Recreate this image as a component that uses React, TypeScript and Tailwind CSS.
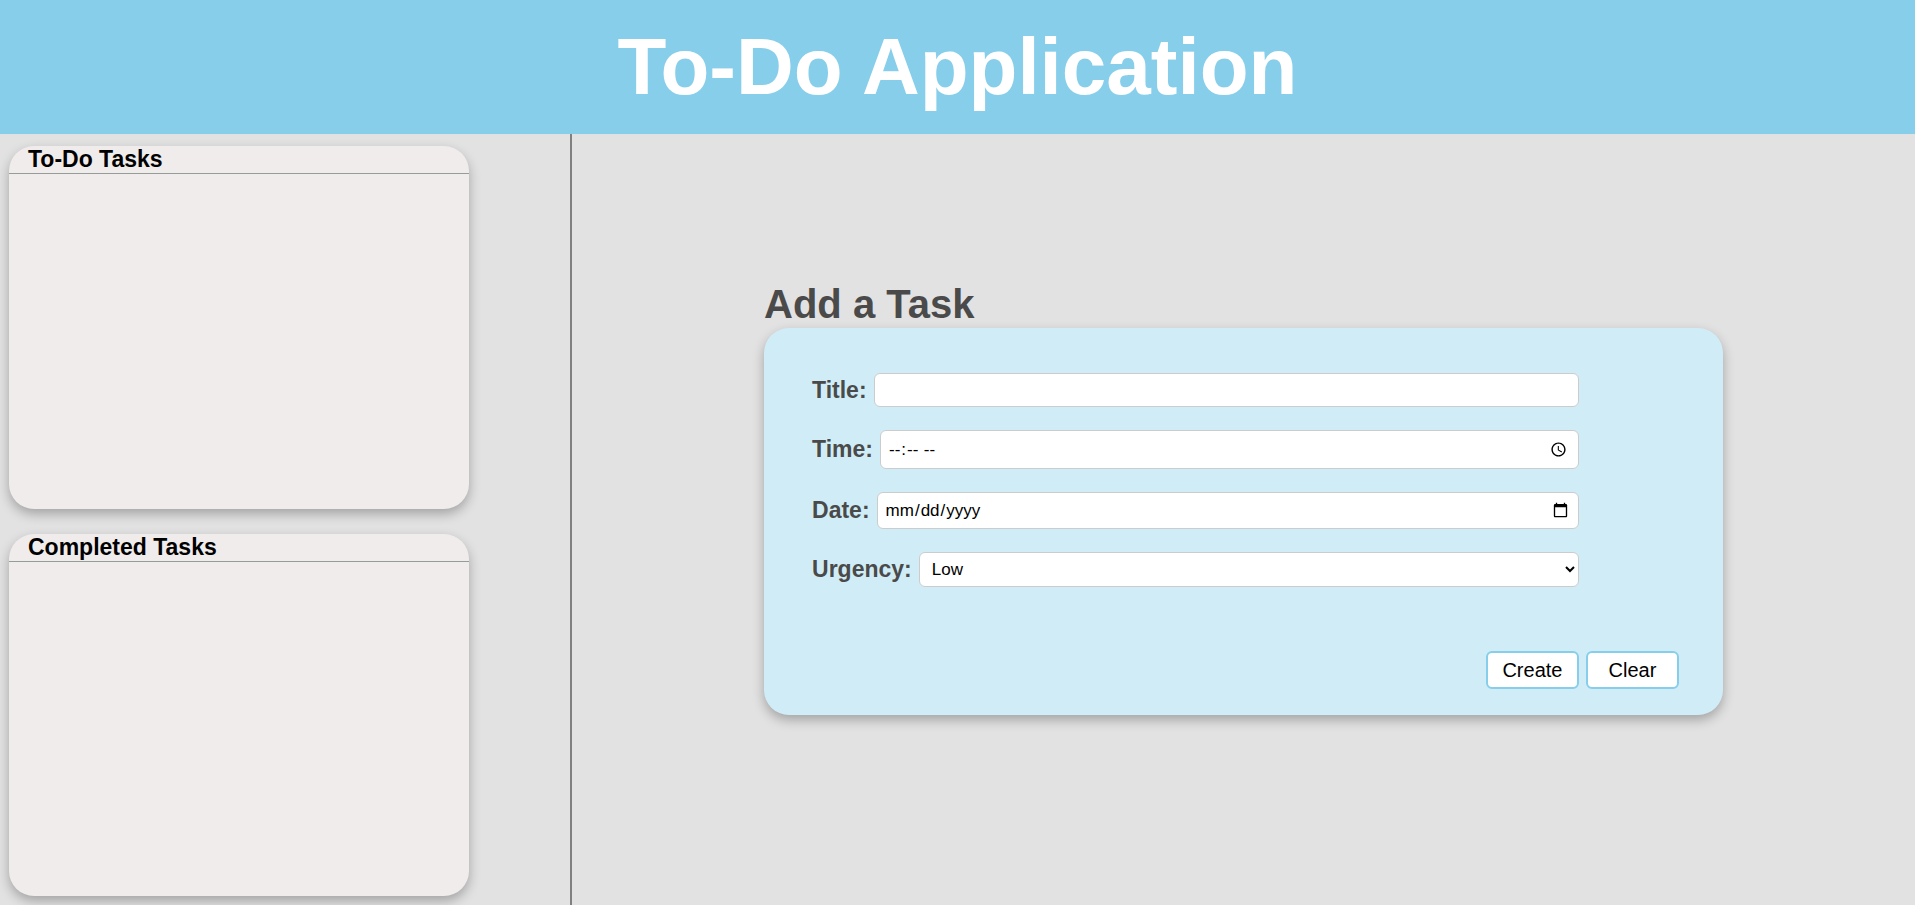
import { useState } from "react";
import type { FormEvent, ReactNode } from "react";

type Task = { title: string; time: string; date: string; urgency: string };

const cardShadow = "shadow-[0_5px_12px_rgba(0,0,0,0.28)]";
const field =
  "min-w-0 flex-1 rounded-[6px] border border-[#cccccc] bg-white text-[17px] text-black";
const button =
  "h-[38px] w-[93px] rounded-[6px] border-2 border-[#87ceeb] bg-white text-[20px] text-black";

function TaskList({ title, tasks }: { title: string; tasks: Task[] }) {
  return (
    <section className={`w-[82%] flex-1 rounded-[25px] bg-[#f0eceb] ${cardShadow}`}>
      <h2 className="border-b border-[#969c98] pl-[19px] text-[23px] leading-[27px] font-bold text-black">
        {title}
      </h2>
      <ul className="px-5 py-2">
        {tasks.map((task, i) => (
          <li key={i}>
            {task.title} {task.date} {task.time} {task.urgency}
          </li>
        ))}
      </ul>
    </section>
  );
}

function Row({ id, label, children }: { id: string; label: string; children: ReactNode }) {
  return (
    <div className="flex items-center gap-[7px]">
      <label htmlFor={id} className="text-[23px] leading-[27px] font-bold text-[#4a4a4a]">
        {label}
      </label>
      {children}
    </div>
  );
}

export default function App() {
  const [tasks, setTasks] = useState<Task[]>([]);

  function create(event: FormEvent<HTMLFormElement>) {
    event.preventDefault();
    const data = new FormData(event.currentTarget);
    const read = (name: string) => String(data.get(name) ?? "");
    setTasks([
      ...tasks,
      { title: read("title"), time: read("time"), date: read("date"), urgency: read("urgency") },
    ]);
    event.currentTarget.reset();
  }

  return (
    <div className="flex min-h-screen flex-col bg-[#e2e2e2] font-['Liberation_Sans',Arial,sans-serif]">
      <header className="bg-[#87ceeb] py-[21px] text-center">
        <h1 className="text-[80px] leading-[92px] font-bold text-white">To-Do Application</h1>
      </header>
      <div className="flex flex-1">
        <aside className="flex w-[29.87%] flex-col gap-[25px] border-r-2 border-[#808080] pt-3 pb-[9px] pl-[9px]">
          <TaskList title="To-Do Tasks" tasks={tasks} />
          <TaskList title="Completed Tasks" tasks={[]} />
        </aside>
        <main className="flex flex-1 flex-col items-center justify-center pb-[42px]">
          <div className="w-[71.4%]">
            <h2 className="pb-0.5 text-[40px] leading-[44px] font-bold text-[#4a4a4a]">
              Add a Task
            </h2>
            <form
              onSubmit={create}
              className={`rounded-[25px] bg-[#d0edf7] pt-[45px] pb-[26px] ${cardShadow}`}
            >
              <div className="ml-12 flex w-4/5 flex-col gap-[23px]">
                <Row id="title" label="Title:">
                  <input id="title" name="title" type="text" className={`${field} h-[34px] px-2`} />
                </Row>
                <Row id="time" label="Time:">
                  <input id="time" name="time" type="time" className={`${field} h-[39px] px-[7px]`} />
                </Row>
                <Row id="date" label="Date:">
                  <input id="date" name="date" type="date" className={`${field} h-[37px] px-[7px]`} />
                </Row>
                <Row id="urgency" label="Urgency:">
                  <select id="urgency" name="urgency" className={`${field} h-[35px] pl-2`}>
                    <option>Low</option>
                    <option>Medium</option>
                    <option>High</option>
                  </select>
                </Row>
              </div>
              <div className="mt-16 mr-11 flex justify-end gap-[7px]">
                <button type="submit" className={button}>
                  Create
                </button>
                <button type="reset" className={button}>
                  Clear
                </button>
              </div>
            </form>
          </div>
        </main>
      </div>
    </div>
  );
}
